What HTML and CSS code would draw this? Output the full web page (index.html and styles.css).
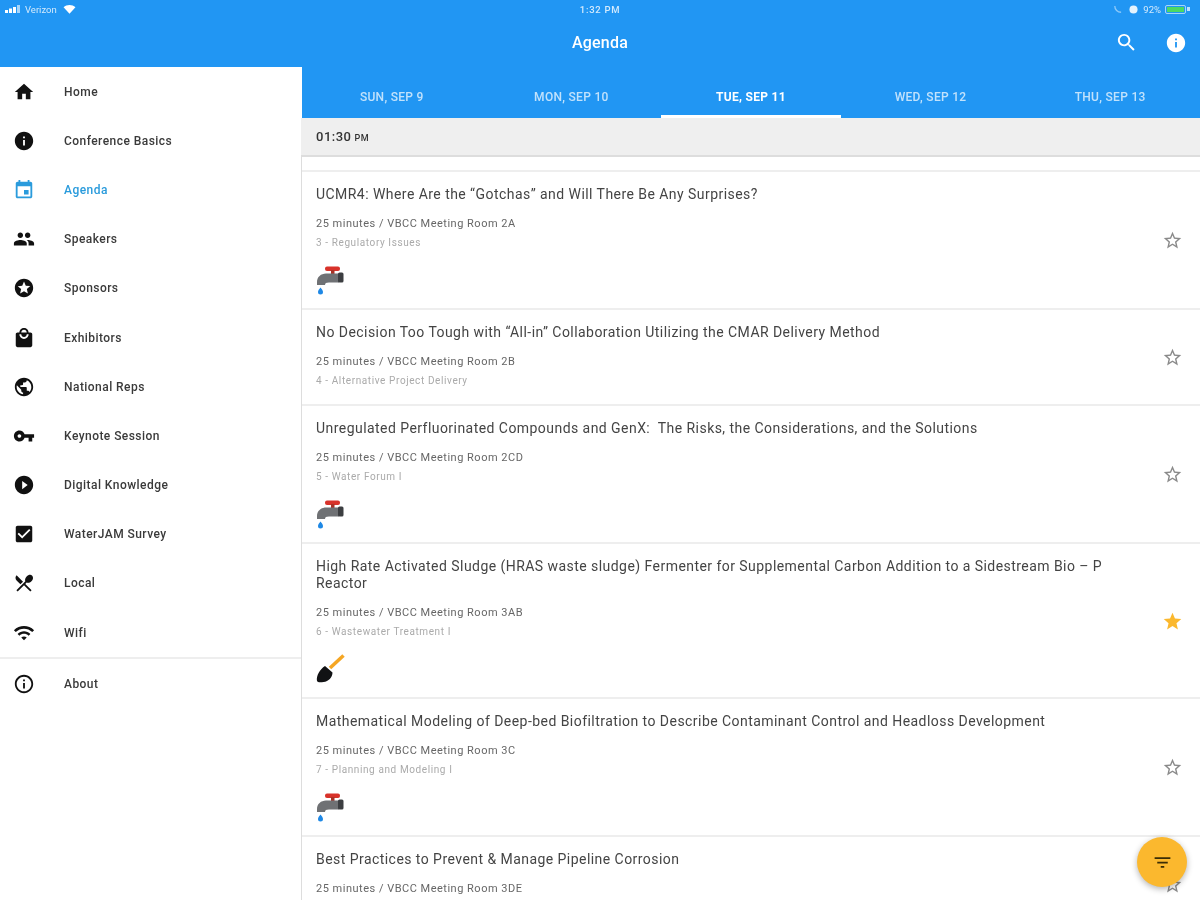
FILE: index.html
```html
<!DOCTYPE html>
<html lang="en">
<head>
<meta charset="utf-8">
<title>Agenda</title>
<link rel="stylesheet" href="styles.css">
</head>
<body>
<svg class="defs" width="0" height="0" aria-hidden="true">
  <symbol id="faucet" viewBox="0 0 29 31">
    <rect x="9" y="1.500" width="15" height="4.500" rx="2" fill="#d8322a"/>
    <rect x="15" y="5" width="3.500" height="4" fill="#a93226"/>
    <path d="M1 20v-3c0-5 4-8.500 9-8.500h13v9H13c-3 0-4 .8-4 2.500z" fill="#6f7174"/>
    <rect x="22" y="7.500" width="5.500" height="10" rx="1.500" fill="#3c3e41"/>
    <path d="M4.500 22.500c1.300 1.800 2.500 3 2.500 4.500a2.500 2.500 0 0 1-5 0c0-1.500 1.200-2.700 2.500-4.500z" fill="#1e88e5"/>
  </symbol>
  <symbol id="shovel" viewBox="0 0 29 31">
    <path d="M27.500 1.500 14 14" stroke="#f5a623" stroke-width="3.500" fill="none"/>
    <path d="M9 12l7.500 6.500c0 5-4 9-9 9.500-3 .5-6 .5-6.500-1-1-5 3-12 8-15z" fill="#111214"/>
  </symbol>
  <symbol id="star-o" viewBox="0 0 24 24">
    <path d="M22 9.240l-7.190-.62L12 2 9.190 8.630 2 9.240l5.460 4.730L5.820 21 12 17.270 18.180 21l-1.630-7.030L22 9.240zM12 15.400l-3.760 2.270 1-4.280-3.320-2.880 4.380-.38L12 6.100l1.710 4.040 4.380.38-3.320 2.880 1 4.280L12 15.400z"/>
  </symbol>
</svg>
<div class="screen">
  <header class="topbar">
    <div class="status">
      <div class="status-left">
        <svg class="signal" viewBox="0 0 17 8"><rect x="0" y="5" width="3" height="3"/><rect x="4" y="3.500" width="3" height="4.500"/><rect x="8" y="2" width="3" height="6"/><rect x="12" y="0" width="3" height="8" opacity=".6"/></svg>
        <span>Verizon</span>
        <svg class="status-wifi" viewBox="0 0 24 24"><path d="M12 20 1 8c6-6 16-6 22 0z"/></svg>
      </div>
      <div class="status-time">1:32 PM</div>
      <div class="status-right">
        <svg class="moon" viewBox="0 0 10 10"><path d="M2 1c0 4 3 7 7 7" fill="none" stroke="currentColor" stroke-width="1.500"/></svg>
        <svg class="lock" viewBox="0 0 10 10"><circle cx="5" cy="5" r="4.500"/></svg>
        <span>92%</span>
        <span class="battery"><span class="battery-fill"></span></span>
        <span class="charge"></span>
      </div>
    </div>
    <div class="appbar">
      <h1 class="app-title">Agenda</h1>
      <svg class="app-search" viewBox="0 0 24 24"><path d="M15.500 14h-.79l-.28-.27C15.410 12.590 16 11.110 16 9.500 16 5.910 13.090 3 9.500 3S3 5.910 3 9.500 5.910 16 9.500 16c1.610 0 3.090-.59 4.230-1.570l.27.28v.79l5 4.990L20.490 19l-4.990-5zm-6 0C7.010 14 5 11.990 5 9.500S7.010 5 9.500 5 14 7.010 14 9.500 11.990 14 9.500 14z"/></svg>
      <svg class="app-info" viewBox="0 0 24 24"><path d="M12 2C6.480 2 2 6.480 2 12s4.480 10 10 10 10-4.480 10-10S17.520 2 12 2zm1 15h-2v-6h2v6zm0-8h-2V7h2v2z"/></svg>
    </div>
  </header>
  <div class="body">
    <nav class="drawer">
      <ul class="menu">
        <li class="menu-item"><svg class="menu-icon" viewBox="0 0 24 24"><path d="M10 20v-6h4v6h5v-8h3L12 3 2 12h3v8z"/></svg>Home</li>
        <li class="menu-item"><svg class="menu-icon" viewBox="0 0 24 24"><path d="M12 2C6.480 2 2 6.480 2 12s4.480 10 10 10 10-4.480 10-10S17.520 2 12 2zm1 15h-2v-6h2v6zm0-8h-2V7h2v2z"/></svg>Conference Basics</li>
        <li class="menu-item is-active"><svg class="menu-icon" viewBox="0 0 24 24"><path d="M17 12h-5v5h5v-5zM16 1v2H8V1H6v2H5c-1.110 0-1.990.9-1.990 2L3 19c0 1.100.89 2 2 2h14c1.100 0 2-.9 2-2V5c0-1.100-.9-2-2-2h-1V1h-2zm3 18H5V8h14v11z"/></svg>Agenda</li>
        <li class="menu-item"><svg class="menu-icon" viewBox="0 0 24 24"><path d="M16 11c1.660 0 2.990-1.340 2.990-3S17.660 5 16 5c-1.660 0-3 1.340-3 3s1.340 3 3 3zm-8 0c1.660 0 2.990-1.340 2.990-3S9.660 5 8 5C6.340 5 5 6.340 5 8s1.340 3 3 3zm0 2c-2.330 0-7 1.170-7 3.500V19h14v-2.500c0-2.330-4.670-3.500-7-3.500zm8 0c-.29 0-.62.02-.97.05 1.160.84 1.970 1.970 1.970 3.450V19h6v-2.500c0-2.330-4.670-3.500-7-3.500z"/></svg>Speakers</li>
        <li class="menu-item"><svg class="menu-icon" viewBox="0 0 24 24"><path d="M11.990 2C6.470 2 2 6.480 2 12s4.470 10 9.990 10C17.520 22 22 17.520 22 12S17.520 2 11.990 2zm4.240 16L12 15.450 7.770 18l1.120-4.810-3.730-3.230 4.920-.42L12 5l1.920 4.530 4.920.42-3.730 3.230L16.230 18z"/></svg>Sponsors</li>
        <li class="menu-item"><svg class="menu-icon" viewBox="0 0 24 24"><path d="M19 6h-2c0-2.760-2.240-5-5-5S7 3.240 7 6H5c-1.100 0-1.990.9-1.990 2L3 20c0 1.100.9 2 2 2h14c1.100 0 2-.9 2-2V8c0-1.100-.9-2-2-2zm-7-3c1.660 0 3 1.340 3 3H9c0-1.660 1.340-3 3-3zm0 10c-2.760 0-5-2.240-5-5h2c0 1.660 1.340 3 3 3s3-1.340 3-3h2c0 2.760-2.240 5-5 5z"/></svg>Exhibitors</li>
        <li class="menu-item"><svg class="menu-icon" viewBox="0 0 24 24"><path d="M12 2C6.480 2 2 6.480 2 12s4.480 10 10 10 10-4.480 10-10S17.520 2 12 2zm-1 17.930c-3.950-.49-7-3.850-7-7.930 0-.62.08-1.210.21-1.790L9 15v1c0 1.100.9 2 2 2v1.930zm6.900-2.540c-.26-.81-1-1.390-1.900-1.390h-1v-3c0-.55-.45-1-1-1H8v-2h2c.55 0 1-.45 1-1V7h2c1.100 0 2-.9 2-2v-.41c2.930 1.190 5 4.060 5 7.410 0 2.080-.8 3.970-2.100 5.390z"/></svg>National Reps</li>
        <li class="menu-item"><svg class="menu-icon" viewBox="0 0 24 24"><path d="M12.650 10C11.830 7.670 9.610 6 7 6c-3.310 0-6 2.690-6 6s2.690 6 6 6c2.610 0 4.830-1.670 5.650-4H17v4h4v-4h2v-4H12.650zM7 14c-1.100 0-2-.9-2-2s.9-2 2-2 2 .9 2 2-.9 2-2 2z"/></svg>Keynote Session</li>
        <li class="menu-item"><svg class="menu-icon" viewBox="0 0 24 24"><path d="M12 2C6.480 2 2 6.480 2 12s4.480 10 10 10 10-4.480 10-10S17.520 2 12 2zm-2 14.500v-9l6 4.500-6 4.500z"/></svg>Digital Knowledge</li>
        <li class="menu-item"><svg class="menu-icon" viewBox="0 0 24 24"><path d="M19 3H5c-1.110 0-2 .9-2 2v14c0 1.100.89 2 2 2h14c1.110 0 2-.9 2-2V5c0-1.100-.89-2-2-2zm-9 14l-5-5 1.410-1.410L10 14.170l7.590-7.590L19 8l-9 9z"/></svg>WaterJAM Survey</li>
        <li class="menu-item"><svg class="menu-icon" viewBox="0 0 24 24"><path d="M8.100 13.340l2.830-2.830L3.910 3.500c-1.560 1.560-1.560 4.090 0 5.660l4.190 4.180zm6.780-1.810c1.530.71 3.680.21 5.270-1.380 1.910-1.910 2.280-4.650.81-6.120-1.460-1.460-4.200-1.100-6.120.81-1.590 1.590-2.090 3.740-1.380 5.270L3.700 19.870l1.410 1.410L12 14.410l6.880 6.880 1.410-1.410L13.410 13l1.470-1.470z"/></svg>Local</li>
        <li class="menu-item"><svg class="menu-icon" viewBox="0 0 24 24"><path d="M1 9l2 2c4.970-4.970 13.030-4.970 18 0l2-2C16.930 2.930 7.080 2.930 1 9zm8 8l3 3 3-3c-1.650-1.660-4.340-1.660-6 0zm-4-4l2 2c2.760-2.760 7.240-2.760 10 0l2-2C15.140 9.140 8.870 9.140 5 13z"/></svg>Wifi</li>
      </ul>
      <ul class="menu menu-foot">
        <li class="menu-item"><svg class="menu-icon" viewBox="0 0 24 24"><path d="M11 17h2v-6h-2v6zm1-15C6.480 2 2 6.480 2 12s4.480 10 10 10 10-4.480 10-10S17.520 2 12 2zm0 18c-4.410 0-8-3.590-8-8s3.590-8 8-8 8 3.590 8 8-3.590 8-8 8zM11 9h2V7h-2v2z"/></svg>About</li>
      </ul>
    </nav>
    <main class="main">
      <div class="tabs">
        <div class="tab">SUN, SEP 9</div>
        <div class="tab">MON, SEP 10</div>
        <div class="tab is-active">TUE, SEP 11</div>
        <div class="tab">WED, SEP 12</div>
        <div class="tab">THU, SEP 13</div>
      </div>
      <div class="timebar">01:30 <small class="ampm">PM</small></div>
      <div class="list">
        <article class="session">
          <div class="session-text">
            <h2 class="session-title">UCMR4: Where Are the “Gotchas” and Will There Be Any Surprises?</h2>
            <p class="session-meta">25 minutes / VBCC Meeting Room 2A</p>
            <p class="session-track">3 - Regulatory Issues</p>
            <svg class="session-art"><use href="#faucet"/></svg>
          </div>
          <svg class="fav"><use href="#star-o"/></svg>
        </article>
        <article class="session">
          <div class="session-text">
            <h2 class="session-title">No Decision Too Tough with “All-in” Collaboration Utilizing the CMAR Delivery Method</h2>
            <p class="session-meta">25 minutes / VBCC Meeting Room 2B</p>
            <p class="session-track">4 - Alternative Project Delivery</p>
          </div>
          <svg class="fav"><use href="#star-o"/></svg>
        </article>
        <article class="session">
          <div class="session-text">
            <h2 class="session-title">Unregulated Perfluorinated Compounds and GenX:&nbsp; The Risks, the Considerations, and the Solutions</h2>
            <p class="session-meta">25 minutes / VBCC Meeting Room 2CD</p>
            <p class="session-track">5 - Water Forum I</p>
            <svg class="session-art"><use href="#faucet"/></svg>
          </div>
          <svg class="fav"><use href="#star-o"/></svg>
        </article>
        <article class="session">
          <div class="session-text">
            <h2 class="session-title">High Rate Activated Sludge (HRAS waste sludge) Fermenter for Supplemental Carbon Addition to a Sidestream Bio – P Reactor</h2>
            <p class="session-meta">25 minutes / VBCC Meeting Room 3AB</p>
            <p class="session-track">6 - Wastewater Treatment I</p>
            <svg class="session-art"><use href="#shovel"/></svg>
          </div>
          <svg class="fav is-on" viewBox="0 0 24 24"><path d="M12 17.270L18.180 21l-1.640-7.030L22 9.240l-7.190-.61L12 2 9.190 8.630 2 9.240l5.460 4.730L5.820 21z"/></svg>
        </article>
        <article class="session">
          <div class="session-text">
            <h2 class="session-title">Mathematical Modeling of Deep-bed Biofiltration to Describe Contaminant Control and Headloss Development</h2>
            <p class="session-meta">25 minutes / VBCC Meeting Room 3C</p>
            <p class="session-track">7 - Planning and Modeling I</p>
            <svg class="session-art"><use href="#faucet"/></svg>
          </div>
          <svg class="fav"><use href="#star-o"/></svg>
        </article>
        <article class="session">
          <div class="session-text">
            <h2 class="session-title">Best Practices to Prevent &amp; Manage Pipeline Corrosion</h2>
            <p class="session-meta">25 minutes / VBCC Meeting Room 3DE</p>
            <p class="session-track"></p>
          </div>
          <svg class="fav"><use href="#star-o"/></svg>
        </article>
      </div>
    </main>
  </div>
  <button class="fab" type="button" aria-label="Filter">
    <svg class="fab-icon" viewBox="0 0 24 24"><path d="M10 18h4v-2h-4v2zM3 6v2h18V6H3zm3 7h12v-2H6v2z"/></svg>
  </button>
</div>
</body>
</html>
```
FILE: styles.css
```css
* { box-sizing: border-box; }
html, body { margin: 0; padding: 0; }
body { font-family: Roboto, "Liberation Sans", sans-serif; background: #fff; }
.defs { position: absolute; }
.screen {
  position: relative;
  width: 1200px;
  height: 900px;
  overflow: hidden;
  display: flex;
  flex-direction: column;
  background: #fff;
  filter: blur(0.7px);
}
.topbar { background: #2196f3; color: #fff; height: 67px; flex: none; }
.status {
  height: 18px;
  padding: 0 5px;
  display: grid;
  grid-template-columns: 1fr auto 1fr;
  align-items: center;
  font-size: 9.500px;
  color: rgba(255,255,255,.8);
}
.status-left { display: flex; align-items: center; gap: 3px; }
.signal { width: 17px; height: 8px; fill: #fff; }
.status-wifi { width: 13px; height: 13px; fill: #fff; margin-left: 3px; }
.status-time { font-weight: 500; letter-spacing: .7px; }
.status-right { display: flex; justify-content: flex-end; align-items: center; gap: 4px; padding-right: 5px; }
.moon { width: 9px; height: 9px; margin-right: 3px; opacity: .6; }
.lock { width: 9px; height: 9px; fill: #e3f2fd; margin-right: 1px; }
.battery { width: 21px; height: 9px; padding: 1px; border: 1px solid rgba(255,255,255,.6); border-radius: 2px; display: flex; }
.battery-fill { flex: 1; background: #4cd964; }
.charge { width: 3px; height: 4px; background: rgba(255,255,255,.7); margin-left: -3px; }
.appbar { position: relative; height: 49px; display: flex; align-items: center; padding-right: 13px; gap: 27px; justify-content: flex-end; }
.app-title {
  position: absolute;
  left: 0;
  right: 0;
  top: 15px;
  margin: 0;
  text-align: center;
  font-size: 16px;
  line-height: 20px;
  font-weight: 500;
  letter-spacing: .2px;
}
.app-search { width: 23px; height: 23px; fill: #fff; }
.app-info { width: 22px; height: 22px; fill: #fff; }
.body { flex: 1; min-height: 0; display: flex; background: #2196f3; }
.drawer { width: 302px; flex: none; background: #fff; }
.menu { list-style: none; margin: 0; padding: 0; }
.menu-foot { border-top: 2px solid #eee; }
.menu-item {
  height: 49.200px;
  display: flex;
  align-items: center;
  padding-left: 13px;
  gap: 29px;
  font-size: 12px;
  font-weight: 500;
  letter-spacing: .45px;
  color: #3a3a3a;
}
.menu-icon { width: 22px; height: 22px; fill: #111; flex: none; }
.is-active.menu-item { color: #2a9bdc; }
.is-active .menu-icon { fill: #2a9bdc; }
.main { flex: 1; min-width: 0; display: flex; flex-direction: column; background: #fff; }
.tabs { height: 51px; flex: none; display: flex; background: #2196f3; }
.tab {
  flex: 1;
  display: flex;
  align-items: center;
  justify-content: center;
  font-size: 12px;
  font-weight: 500;
  letter-spacing: .3px;
  color: rgba(255,255,255,.72);
  padding-top: 11px;
  border-bottom: 3px solid transparent;
}
.tab.is-active { color: #fff; font-weight: 700; border-bottom-color: #fff; }
.timebar {
  height: 39px;
  flex: none;
  display: flex;
  align-items: center;
  gap: 3px;
  margin-left: -1px;
  padding-left: 15px;
  background: #efefef;
  border-bottom: 2px solid #ddd;
  font-size: 13px;
  font-weight: 500;
  letter-spacing: .5px;
  color: #333;
}
.ampm { font-size: 9px; font-weight: 500; margin-top: 2px; }
.list { flex: 1; margin-left: -1px; padding-top: 14px; border-left: 1px solid #ddd; }
.session {
  display: flex;
  align-items: center;
  padding: 0 17px 0 14px;
  border-top: 2px solid #eee;
  margin-top: -1px;
}
.session-text { flex: 1; min-width: 0; padding: 14px 40px 17px 0; }
.session-title {
  margin: 0;
  font-size: 14px;
  line-height: 17px;
  font-weight: 400;
  letter-spacing: .45px;
  color: #444;
}
.session-meta { margin: 14px 0 0; font-size: 11px; line-height: 14px; color: #666; letter-spacing: .5px; }
.session-track { margin: 5px 0 0; min-height: 14px; font-size: 10px; line-height: 14px; color: #aaa; letter-spacing: .6px; }
.session-art { display: block; width: 29px; height: 31px; margin: 15px 0 -4px; }
.fav { width: 21px; height: 21px; fill: #8a8a8a; flex: none; }
.fav.is-on { fill: #fbb82e; }
.fab {
  position: absolute;
  left: 1137px;
  top: 837px;
  width: 50px;
  height: 50px;
  border: 0;
  padding: 0;
  border-radius: 50%;
  background: #fbb82e;
  box-shadow: 0 2px 6px rgba(0,0,0,.3);
  display: flex;
  align-items: center;
  justify-content: center;
}
.fab-icon { width: 21px; height: 21px; fill: #3a2c05; }
```
